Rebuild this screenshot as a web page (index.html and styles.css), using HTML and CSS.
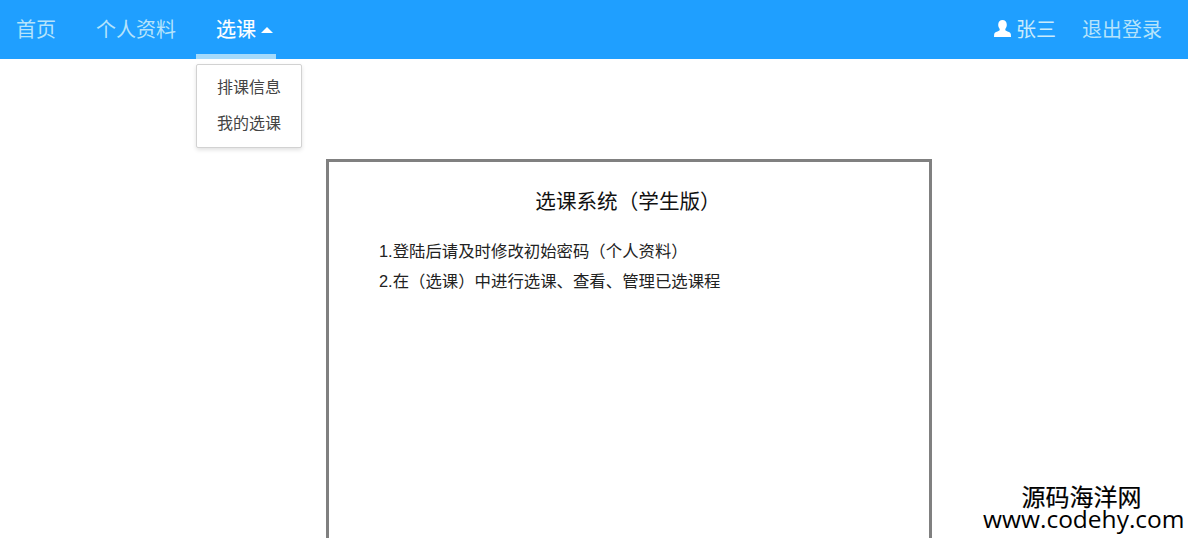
FILE: index.html
```html
<!DOCTYPE html>
<html lang="zh-CN">
<head>
<meta charset="utf-8">
<title>选课系统</title>
<link rel="stylesheet" href="styles.css">
</head>
<body>
<header class="nav">
  <ul class="nav-group">
    <li class="nav-item"><a>首页</a></li>
    <li class="nav-item"><a>个人资料</a></li>
    <li class="nav-item active">
      <a>选课<span class="caret"></span></a>
      <ul class="dropdown">
        <li>排课信息</li>
        <li>我的选课</li>
      </ul>
    </li>
  </ul>
  <ul class="nav-group nav-right">
    <li class="nav-item user">
      <svg class="user-icon" viewBox="0 0 17 17" width="17" height="17"><path d="M8.5 0C6 0 4.2 2 4.2 4.8c0 1.7.6 3.1 1.5 4.1.1.9-.1 1.5-.8 1.9C3.2 11.7.6 12.2.2 14L0 17h17l-.2-3c-.4-1.8-3-2.3-4.7-3.2-.7-.4-.9-1-.8-1.9.9-1 1.5-2.4 1.5-4.1C12.8 2 11 0 8.500 0z" fill="#fff"/></svg>
      <a>张三</a>
    </li>
    <li class="nav-item logout"><a>退出登录</a></li>
  </ul>
</header>
<main class="main">
  <section class="panel">
    <h1 class="panel-title">选课系统（学生版）</h1>
    <p class="panel-line">1.登陆后请及时修改初始密码（个人资料）</p>
    <p class="panel-line">2.在（选课）中进行选课、查看、管理已选课程</p>
  </section>
</main>
<div class="watermark">
  <div class="wm-cn">源码海洋网</div>
  <div class="wm-en">www.codehy.com</div>
</div>
</body>
</html>
```
FILE: styles.css
```css
* { box-sizing: border-box; }
html, body { margin: 0; padding: 0; height: 100%; overflow: hidden; background: #fff; }
body { font-family: "Liberation Sans", "Noto Sans CJK SC", sans-serif; color: #222; position: relative; }
ul { list-style: none; margin: 0; padding: 0; }
.nav {
  display: flex;
  justify-content: space-between;
  height: 59px;
  background: #1f9fff;
}
.nav-group { display: flex; margin-left: -4px; }
.nav-right { margin-left: 0; padding-right: 6px; }
.nav-item {
  position: relative;
  display: flex;
  align-items: center;
  height: 59px;
  padding: 0 20px 2px;
  font-size: 20px;
  color: #b5e3fb;
}
.nav-item.active { color: #fff; -webkit-text-stroke: 0.15px #fff; }
.nav-item.active::after {
  content: "";
  position: absolute;
  left: 0;
  right: 0;
  bottom: 0;
  height: 5px;
  background: #a5dafb;
}
.caret {
  display: inline-block;
  width: 0;
  height: 0;
  margin-left: 5px;
  margin-right: -17px;
  vertical-align: 4px;
  border-left: 6px solid transparent;
  border-right: 6px solid transparent;
  border-bottom: 6px solid #fff;
}
.dropdown {
  position: absolute;
  top: 64px;
  left: 0;
  width: 106px;
  height: 84px;
  padding: 5px 0;
  background: #fff;
  border: 1px solid #d2d2d2;
  border-radius: 2px;
  box-shadow: 0 2px 4px rgba(0,0,0,.12);
  font-size: 16px;
  color: #444;
  -webkit-text-stroke: 0;
  z-index: 2;
}
.dropdown li { height: 36px; line-height: 36px; padding-left: 20px; white-space: nowrap; }
.user { padding: 0 6px 2px 0; color: #c9ebfc; gap: 5px; }
.user-icon { display: block; }
.logout { padding: 0 20px 2px; }
.main { display: flex; padding: 100px 0 0 326px; }
.panel {
  width: 606px;
  height: 500px;
  flex: none;
  border: 3px solid #808080;
  border-bottom: 0;
  padding: 22px 49px 0 50px;
  background: #fff;
}
.panel-title {
  margin: 0 3px 16px 0;
  font-size: 20.6px;
  font-weight: 400;
  line-height: 36px;
  text-align: center;
  color: #111;
}
.panel-line { margin: 0; font-size: 16.4px; line-height: 30px; color: #222; white-space: nowrap; }
.watermark {
  position: absolute;
  right: 4px;
  bottom: 9px;
  width: 201px;
  text-align: center;
  color: #000;
  line-height: 21px;
}
.wm-cn { font-size: 24px; padding-right: 4px; -webkit-text-stroke: 0.2px #000; }
.wm-en { font-size: 24.5px; font-family: "Open Sans", "Liberation Sans", sans-serif; }
```
